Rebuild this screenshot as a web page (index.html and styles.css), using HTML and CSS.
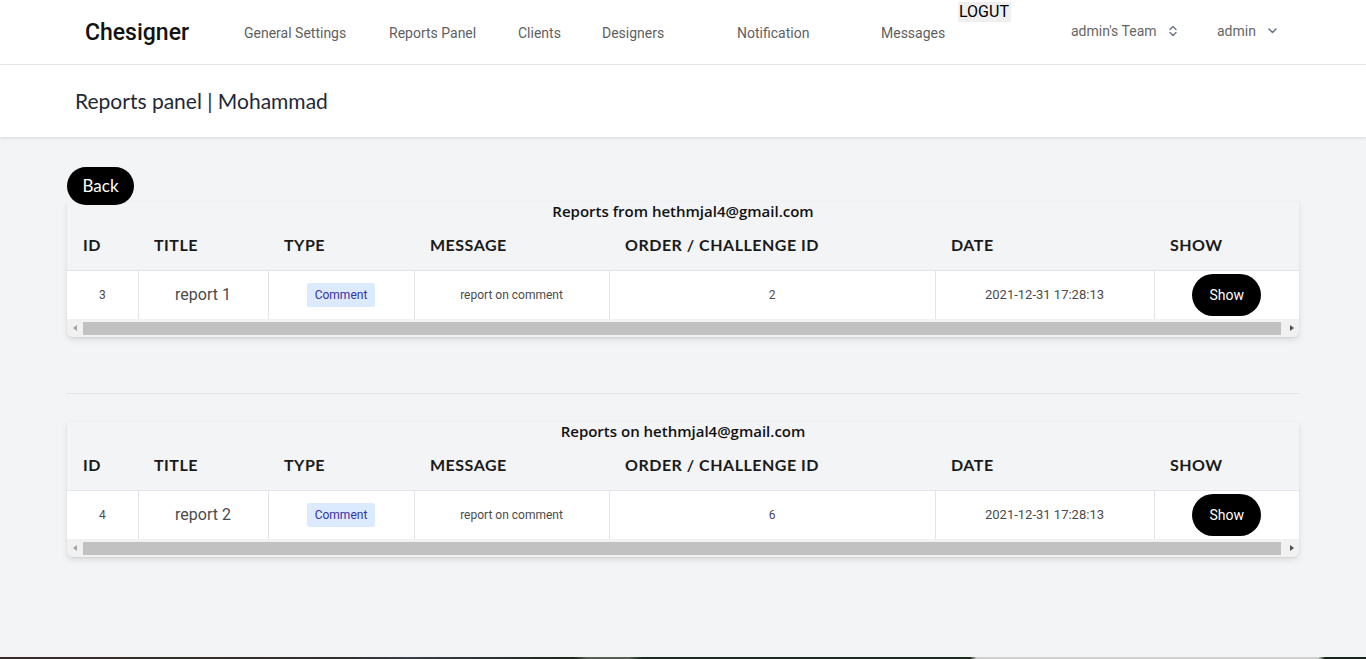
FILE: index.html
```html
<!DOCTYPE html>
<html lang="en">
<head>
<meta charset="utf-8">
<title>Reports panel | Mohammad</title>
<link rel="stylesheet" href="styles.css">
</head>
<body>
<div class="page">
  <nav class="nav">
    <div class="logo">Chesigner</div>
    <a class="link w-general">General Settings</a>
    <a class="link w-reports">Reports Panel</a>
    <a class="link w-clients">Clients</a>
    <a class="link w-designers">Designers</a>
    <a class="link w-notif">Notification</a>
    <a class="link w-messages">Messages</a>
    <a class="logout">LOGUT</a>
    <div class="drop team">admin's Team
      <svg class="updown" width="8" height="12" viewBox="0 0 8 12"><path d="M1 4.5 L4 1.5 L7 4.5 M1 7.5 L4 10.5 L7 7.5" fill="none" stroke="#6b7280" stroke-width="1.4" stroke-linecap="round" stroke-linejoin="round"/></svg>
    </div>
    <div class="drop user">admin
      <svg class="down" width="9" height="6" viewBox="0 0 9 6"><path d="M1 1 L4.5 4.5 L8 1" fill="none" stroke="#6b7280" stroke-width="1.5" stroke-linecap="round" stroke-linejoin="round"/></svg>
    </div>
  </nav>

  <header class="head">
    <h1 class="title">Reports panel | Mohammad</h1>
  </header>

  <main class="main">
    <button class="back">Back</button>

    <section class="card first">
      <div class="caption">Reports from hethmjal4@gmail.com</div>
      <table class="tbl">
        <colgroup>
          <col class="c1"><col class="c2"><col class="c3"><col class="c4"><col class="c5"><col class="c6"><col class="c7">
        </colgroup>
        <thead>
          <tr><th>ID</th><th>TITLE</th><th>TYPE</th><th>MESSAGE</th><th>ORDER / CHALLENGE ID</th><th>DATE</th><th>SHOW</th></tr>
        </thead>
        <tbody>
          <tr>
            <td class="id">3</td>
            <td class="name">report 1</td>
            <td><span class="badge">Comment</span></td>
            <td class="msg">report on comment</td>
            <td class="num">2</td>
            <td class="date">2021-12-31 17:28:13</td>
            <td class="act"><button class="show">Show</button></td>
          </tr>
        </tbody>
      </table>
      <div class="scroll">
        <span class="arr left"></span>
        <span class="thumb"></span>
        <span class="arr right"></span>
      </div>
    </section>

    <hr class="divider">

    <section class="card">
      <div class="caption">Reports on hethmjal4@gmail.com</div>
      <table class="tbl">
        <colgroup>
          <col class="c1"><col class="c2"><col class="c3"><col class="c4"><col class="c5"><col class="c6"><col class="c7">
        </colgroup>
        <thead>
          <tr><th>ID</th><th>TITLE</th><th>TYPE</th><th>MESSAGE</th><th>ORDER / CHALLENGE ID</th><th>DATE</th><th>SHOW</th></tr>
        </thead>
        <tbody>
          <tr>
            <td class="id">4</td>
            <td class="name">report 2</td>
            <td><span class="badge">Comment</span></td>
            <td class="msg">report on comment</td>
            <td class="num">6</td>
            <td class="date">2021-12-31 17:28:13</td>
            <td class="act"><button class="show">Show</button></td>
          </tr>
        </tbody>
      </table>
      <div class="scroll">
        <span class="arr left"></span>
        <span class="thumb"></span>
        <span class="arr right"></span>
      </div>
    </section>
  </main>
  <div class="strip"></div>
</div>
</body>
</html>
```

FILE: styles.css
```css
* { box-sizing: border-box; }
html, body { margin: 0; padding: 0; }
body {
  font-family: "Lato", "Noto Sans", sans-serif;
  background: #f3f4f6;
  color: #111827;
}
.page {
  height: 100vh;
  display: flex;
  flex-direction: column;
  overflow: hidden;
}

/* NAV */
.nav {
  height: 65px;
  flex: none;
  background: #fff;
  border-bottom: 1px solid #ececec;
  display: flex;
  align-items: center;
  padding-left: 85px;
  font-family: "Roboto", sans-serif;
}
.logo {
  font-size: 23px;
  font-weight: 500;
  color: #111;
  width: 159px;
}
.link {
  font-size: 14px;
  color: #5f5f5f;
  padding-top: 1px;
}
.w-general { width: 145px; }
.w-reports { width: 129px; }
.w-clients { width: 84px; }
.w-designers { width: 135px; }
.w-notif { width: 144px; }
.w-messages { width: 77px; }
.logout {
  align-self: flex-start;
  margin-top: 2px;
  background: #efefef;
  color: #000;
  font-size: 16px;
  line-height: 20px;
  padding: 0 1px;
  width: 53px;
  margin-right: 60px;
}
.drop {
  display: flex;
  align-items: center;
  font-size: 14px;
  color: #666;
  margin-bottom: 2px;
}
.team { width: 146px; }
.team .updown { margin-left: 12px; }
.user .down { margin-left: 12px; }

/* HEADER */
.head {
  flex: none;
  height: 72px;
  background: #fff;
  box-shadow: 0 1px 3px rgba(0,0,0,0.12);
  display: flex;
  align-items: center;
  padding-left: 75px;
  padding-bottom: 2px;
  position: relative;
}
.title {
  margin: 0;
  font-family: "Lato", sans-serif;
  font-weight: 400;
  font-size: 21px;
  color: #1f2937;
}

/* MAIN */
.main {
  flex: 1;
  padding: 30px 67px 0;
}
.back {
  display: block;
  height: 38px;
  width: 67px;
  border: 0;
  border-radius: 19px;
  background: #000;
  color: #fff;
  font-family: "Lato", sans-serif;
  font-size: 17px;
  padding: 0 0 2px;
  position: relative;
  z-index: 1;
}
.card {
  background: #f3f4f6;
  border-radius: 0 0 6px 6px;
  box-shadow: 0 3px 6px rgba(0,0,0,0.10), 0 1px 2px rgba(0,0,0,0.06);
  overflow: hidden;
}
.card.first { margin-top: -3px; }
.caption {
  text-align: center;
  font-family: "Open Sans", sans-serif;
  font-weight: 600;
  font-size: 15px;
  line-height: 18px;
  color: #111;
}
.tbl {
  width: 1232px;
  border-collapse: collapse;
  table-layout: fixed;
}
.c1 { width: 71px; }
.c2 { width: 130px; }
.c3 { width: 146px; }
.c4 { width: 195px; }
.c5 { width: 326px; }
.c6 { width: 219px; }
.c7 { width: 145px; }
.tbl th {
  height: 50px;
  text-align: left;
  padding: 0 0 0 16px;
  font-size: 16px;
  font-weight: 700;
  color: #1a1a1a;
  letter-spacing: 0.5px;
  border-bottom: 1px solid #e2e4e8;
}
.tbl td {
  background: #fff;
  height: 49px;
  padding: 0;
  text-align: center;
  font-family: "Roboto", sans-serif;
  color: #4b4b4b;
  border-left: 1px solid #e2e4e8;
  vertical-align: middle;
}
.tbl td:first-child { border-left: 0; }
.id { font-size: 12px; }
.name { font-size: 16px; color: #333; font-weight: 400; }
.msg { font-size: 12px; }
.num { font-size: 12px; }
.date { font-size: 13px; }
.badge {
  display: inline-block;
  background: #dbeafe;
  color: #3730a3;
  font-size: 12px;
  line-height: 24px;
  padding: 0 8px;
  border-radius: 2px;
}
.show {
  width: 69px;
  height: 42px;
  border: 0;
  border-radius: 21px;
  background: #000;
  color: #fff;
  font-family: "Roboto", sans-serif;
  font-size: 14px;
  padding: 0;
  margin-top: 1px;
}
.scroll {
  height: 18px;
  background: #f1f1f1;
  display: flex;
  align-items: center;
  padding: 0 5px 0 6px;
}
.thumb {
  flex: 1;
  height: 13px;
  background: #c1c1c1;
  margin: 0 9px 0 6px;
}
.arr {
  width: 0;
  height: 0;
  border-top: 3px solid transparent;
  border-bottom: 3px solid transparent;
}
.arr.left { border-right: 4px solid #a3a3a3; }
.arr.right { border-left: 4px solid #505050; }

.divider {
  border: 0;
  border-top: 1px solid #e3e5e8;
  margin: 56px 0 28px;
}

.strip {
  flex: none;
  height: 2px;
  background: linear-gradient(90deg, #3a2a26 0%, #2f2f2f 25%, #3a3d44 30%, #20241e 42%, #5a5e58 43%, #5a5e58 46%, #1e2a1e 47%, #1e2a1e 71%, #cfcfcf 71.5%, #cfcfcf 96.5%, #1a2418 97%);
}
```
